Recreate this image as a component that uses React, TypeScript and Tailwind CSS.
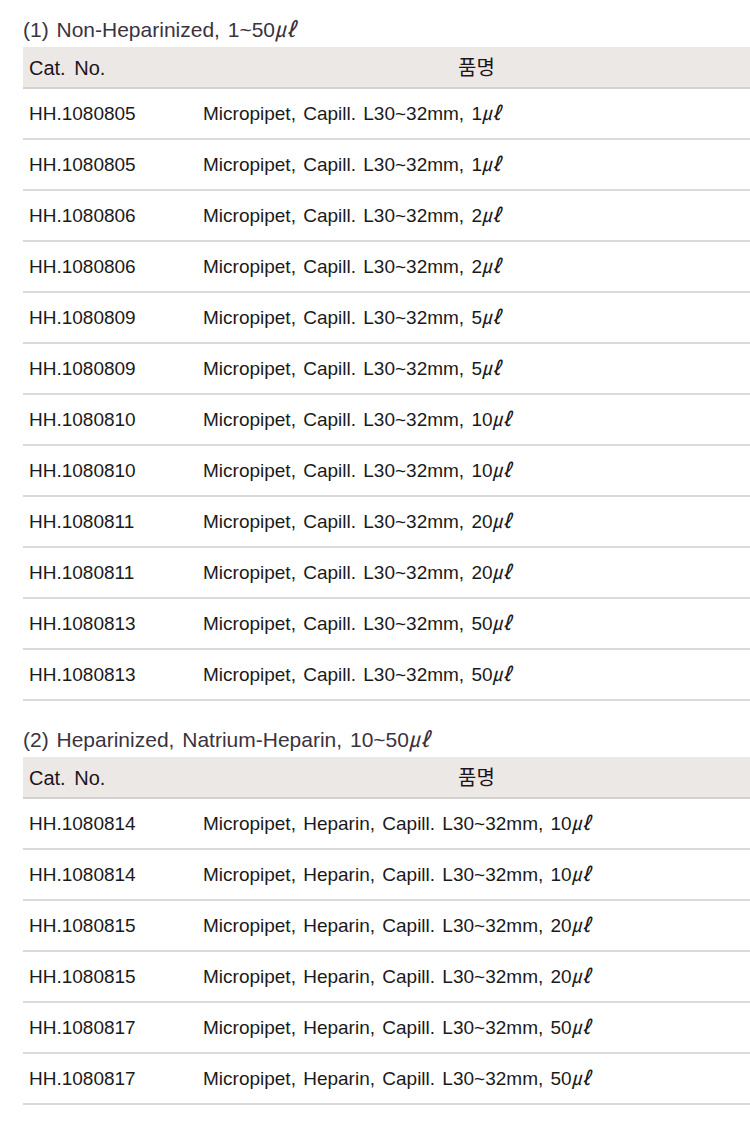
import React from "react";

const sec1: [string, string][] = [
  ["HH.1080805", "Micropipet, Capill. L30~32mm, 1"],
  ["HH.1080805", "Micropipet, Capill. L30~32mm, 1"],
  ["HH.1080806", "Micropipet, Capill. L30~32mm, 2"],
  ["HH.1080806", "Micropipet, Capill. L30~32mm, 2"],
  ["HH.1080809", "Micropipet, Capill. L30~32mm, 5"],
  ["HH.1080809", "Micropipet, Capill. L30~32mm, 5"],
  ["HH.1080810", "Micropipet, Capill. L30~32mm, 10"],
  ["HH.1080810", "Micropipet, Capill. L30~32mm, 10"],
  ["HH.1080811", "Micropipet, Capill. L30~32mm, 20"],
  ["HH.1080811", "Micropipet, Capill. L30~32mm, 20"],
  ["HH.1080813", "Micropipet, Capill. L30~32mm, 50"],
  ["HH.1080813", "Micropipet, Capill. L30~32mm, 50"],
];

const sec2: [string, string][] = [
  ["HH.1080814", "Micropipet, Heparin, Capill. L30~32mm, 10"],
  ["HH.1080814", "Micropipet, Heparin, Capill. L30~32mm, 10"],
  ["HH.1080815", "Micropipet, Heparin, Capill. L30~32mm, 20"],
  ["HH.1080815", "Micropipet, Heparin, Capill. L30~32mm, 20"],
  ["HH.1080817", "Micropipet, Heparin, Capill. L30~32mm, 50"],
  ["HH.1080817", "Micropipet, Heparin, Capill. L30~32mm, 50"],
];

function Section({ title, rows, className }: { title: string; rows: [string, string][]; className?: string }) {
  return (
    <div className={className}>
      <div className="pt-[18px] pb-[5px] leading-[24px] text-[21px] text-[#3b3340] [word-spacing:2px]">
        {title}
        <span className="italic">㎕</span>
      </div>
      <div className="flex h-[42px] items-center pt-[2px] bg-[#ebe8e5] border-b-2 border-[#d4d2d0] text-[20px] text-[#1c1420]">
        <div className="w-[180px] pl-[6px] [word-spacing:3px]">Cat. No.</div>
        <div className="flex-1 text-center">품명</div>
      </div>
      {rows.map((r, i) => (
        <div key={i} className="flex h-[51px] items-center pt-[2px] border-b-2 border-[#dadada] text-[19px] text-[#1a1a1a]">
          <div className="w-[180px] pl-[6px]">{r[0]}</div>
          <div className="flex-1 [word-spacing:2px]">
            {r[1]}
            <span className="italic">㎕</span>
          </div>
        </div>
      ))}
    </div>
  );
}

export default function App() {
  return (
    <div
      className="bg-white w-[750px] h-[1124px] pl-[23px] overflow-hidden"
      style={{ fontFamily: '"Liberation Sans", "Noto Sans CJK KR", sans-serif' }}
    >
      <Section title="(1) Non-Heparinized, 1~50" rows={sec1} />
      <Section title="(2) Heparinized, Natrium-Heparin, 10~50" rows={sec2} className="mt-[9px]" />
    </div>
  );
}
